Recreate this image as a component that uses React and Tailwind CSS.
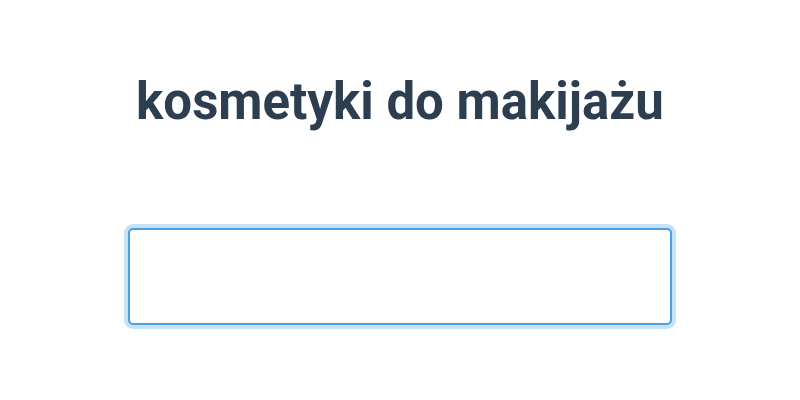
export default function App() {
  return (
    <div className="w-[800px] h-[400px] bg-white flex flex-col items-center font-['Roboto',sans-serif]">
      <h1 className="mt-[72px] text-[51px] leading-[60px] font-bold text-[#2c3e50]">kosmetyki do makijażu</h1>
      <input
        type="text"
        className="mt-[96px] w-[544px] h-[97px] rounded-[5px] border-2 border-[#4a9fe0] ring-4 ring-[#c6e2f7] outline-none bg-white"
      />
    </div>
  );
}
